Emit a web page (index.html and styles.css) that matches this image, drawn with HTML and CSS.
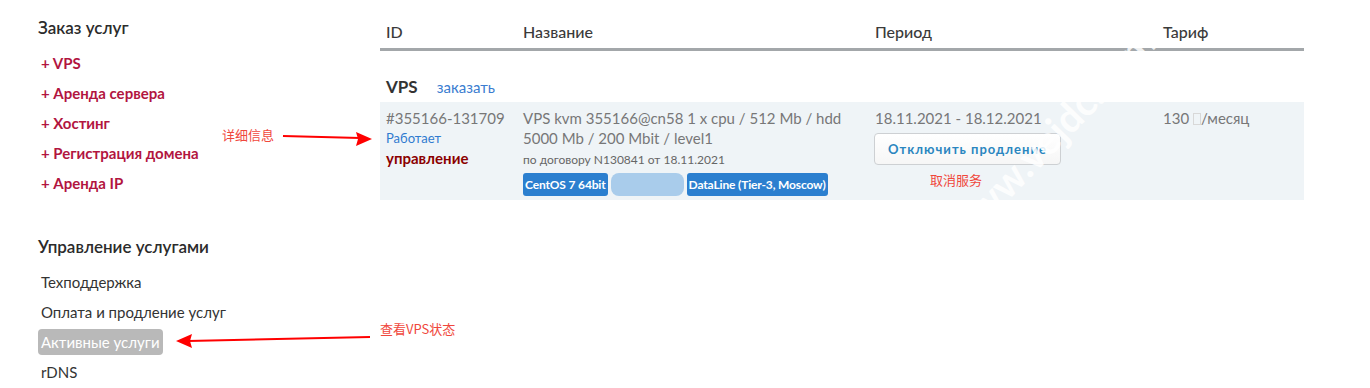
FILE: index.html
```html
<!DOCTYPE html>
<html lang="ru">
<head>
  <meta charset="UTF-8" />
  <meta name="viewport" content="width=device-width, initial-scale=1.0"/>
  <title>Активные услуги</title>
  <link rel="stylesheet" href="styles.css">
</head>
<body>

  <div class="page">

    <!-- Sidebar -->
    <aside class="sidebar">
      <h3 class="side-title">Заказ услуг</h3>
      <ul class="order-list">
        <li><a href="#">+ VPS</a></li>
        <li><a href="#">+ Аренда сервера</a></li>
        <li><a href="#">+ Хостинг</a></li>
        <li><a href="#">+ Регистрация домена</a></li>
        <li><a href="#">+ Аренда IP</a></li>
      </ul>

      <h3 class="side-title manage-title">Управление услугами</h3>
      <ul class="manage-list">
        <li><a href="#">Техподдержка</a></li>
        <li><a href="#">Оплата и продление услуг</a></li>
        <li><a href="#" class="active">Активные услуги</a></li>
        <li><a href="#">rDNS</a></li>
      </ul>
    </aside>

    <!-- Services table -->
    <main class="content">
      <table class="services">
        <thead>
          <tr>
            <th class="col-id">ID</th>
            <th class="col-name">Название</th>
            <th class="col-period">Период</th>
            <th class="col-tariff">Тариф</th>
          </tr>
        </thead>
        <tbody>
          <tr class="group-row">
            <td colspan="4">
              <span class="group-name">VPS</span>
              <a href="#" class="group-order">заказать</a>
            </td>
          </tr>
          <tr class="service-row">
            <td>
              <div class="service-id">#355166-131709</div>
              <div class="status">Работает</div>
              <a href="#" class="manage">управление</a>
            </td>
            <td>
              <div class="service-name">VPS kvm 355166@cn58 1 x cpu / 512 Mb / hdd 5000 Mb / 200 Mbit / level1</div>
              <div class="contract">по договору N130841 от 18.11.2021</div>
              <div class="tags">
                <span class="tag">CentOS 7 64bit</span>
                <span class="tag tag-hidden"></span>
                <span class="tag">DataLine (Tier-3, Moscow)</span>
              </div>
            </td>
            <td>
              <div class="period">18.11.2021 - 18.12.2021</div>
              <button class="renew-btn">Отключить продление</button>
              <div class="note note-cancel">取消服务</div>
            </td>
            <td>
              <div class="price">130 <span class="currency"></span>/месяц</div>
            </td>
          </tr>
        </tbody>
      </table>

      <div class="watermark">www.vejdc.com</div>
    </main>

    <!-- Annotations -->
    <span class="note note-details">详细信息</span>
    <span class="note note-status">查看VPS状态</span>
    <svg class="arrows" width="1370" height="388" viewBox="0 0 1370 388">
      <line x1="283" y1="136" x2="360" y2="138" stroke="#f00" stroke-width="2"/>
      <polygon points="372,139 356,132 358,139 356,146" fill="#f00"/>
      <line x1="370" y1="337" x2="188" y2="341" stroke="#f00" stroke-width="2"/>
      <polygon points="176,341 192,334 190,341 192,348" fill="#f00"/>
    </svg>

  </div>

</body>
</html>
```

FILE: styles.css
```css
* {
  box-sizing: border-box;
  margin: 0;
  padding: 0;
}

body {
  font-family: Lato, "Noto Sans", sans-serif;
  background: #fff;
  color: #333;
}

a {
  text-decoration: none;
}

.page {
  position: relative;
  display: flex;
  padding-left: 38px;
  height: 388px;
  overflow: hidden;
}

/* Sidebar */

.sidebar {
  width: 342px;
  flex-shrink: 0;
  padding-top: 16px;
}

.side-title {
  font-size: 17px;
  font-weight: 600;
  line-height: 24px;
  color: #2b2b2b;
}

.order-list,
.manage-list {
  list-style: none;
  padding-left: 3px;
}

.order-list {
  margin-top: 8px;
}

.order-list li,
.manage-list li {
  height: 30px;
  line-height: 30px;
}

.order-list a {
  font-size: 15px;
  font-weight: 700;
  color: #b2153f;
}

.manage-title {
  margin-top: 37px;
}

.manage-list {
  margin-top: 8px;
}

.manage-list a {
  font-size: 15px;
  color: #333;
}

.manage-list a.active {
  display: inline-block;
  line-height: 26px;
  padding: 0 3px;
  margin-left: -3px;
  border-radius: 4px;
  background: #b9b9b9;
  color: #fff;
}

/* Table */

.content {
  position: relative;
  width: 924px;
  flex-shrink: 0;
}

.services {
  width: 100%;
  border-collapse: collapse;
  table-layout: fixed;
}

.services th {
  text-align: left;
  font-size: 16px;
  font-weight: 500;
  line-height: 22px;
  color: #3a3a3a;
  padding: 21px 6px 5px;
  border-bottom: 3px solid #a3a7aa;
}

.col-id { width: 137px; }
.col-name { width: 352px; }
.col-period { width: 288px; }
.col-tariff { width: 147px; }

.group-row td {
  padding: 24px 6px 3px;
  line-height: 24px;
}

.group-name {
  font-size: 17px;
  font-weight: 700;
  color: #333;
  margin-right: 15px;
}

.group-order {
  font-size: 15px;
  color: #3b7dd0;
}

.service-row td {
  background: #eff4f7;
  vertical-align: top;
  padding: 6px 6px 4px;
  font-size: 15px;
  line-height: 20px;
  color: #777;
}

.status {
  font-size: 13px;
  color: #2f7bd0;
}

.manage {
  display: block;
  font-size: 15px;
  font-weight: 700;
  color: #8b0000;
}

.contract {
  font-size: 12px;
  line-height: 24px;
  color: #666;
}

.tags {
  display: flex;
  gap: 3px;
  margin-top: 1px;
}

.tag {
  display: inline-block;
  height: 23px;
  line-height: 23px;
  padding: 0 2px;
  border-radius: 3px;
  background: #2b7fcf;
  color: #fff;
  font-size: 12px;
  font-weight: 700;
  letter-spacing: -0.15px;
}

.tag-hidden {
  width: 73px;
  background: #a9cceb;
  border-radius: 8px;
}

.renew-btn {
  display: block;
  width: 187px;
  height: 32px;
  margin: 5px 0 0 -1px;
  border: 1px solid #cdd0d3;
  border-radius: 4px;
  background: linear-gradient(#fff, #f6f6f6);
  font-family: Lato, "Noto Sans", sans-serif;
  font-size: 13px;
  font-weight: 700;
  letter-spacing: 1px;
  color: #2a86c0;
  cursor: pointer;
}

.currency {
  display: inline-block;
  width: 8px;
  height: 12px;
  border: 1px solid #d8d8d8;
  vertical-align: -1px;
}

/* Annotations */

.note {
  font-family: "Noto Sans CJK SC", sans-serif;
  font-size: 13px;
  line-height: 18px;
  color: #f0473c;
}

.note-cancel {
  margin: 6px 0 0 55px;
}

.note-details {
  position: absolute;
  left: 222px;
  top: 126px;
}

.note-status {
  position: absolute;
  left: 380px;
  top: 320px;
}

.arrows {
  position: absolute;
  left: 0;
  top: 0;
  pointer-events: none;
}

.watermark {
  position: absolute;
  left: 670px;
  top: 136px;
  transform: translate(-50%, -50%) rotate(-46deg);
  font-size: 40px;
  font-weight: 700;
  color: rgba(255, 255, 255, 0.85);
  white-space: nowrap;
  pointer-events: none;
}
```
